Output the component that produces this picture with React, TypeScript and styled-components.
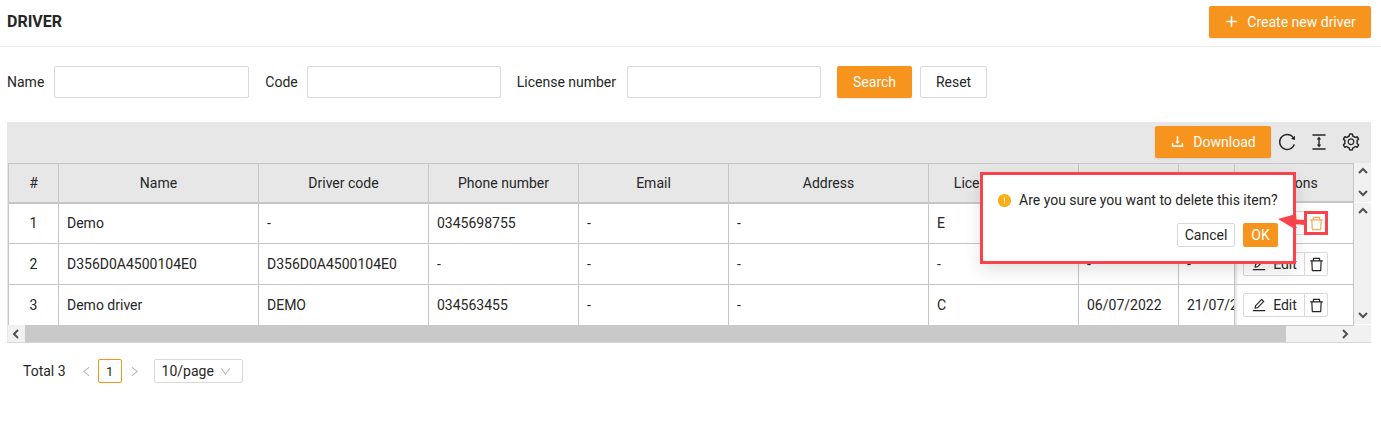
import React from 'react';
import styled, { createGlobalStyle } from 'styled-components';
import {
  AiFillExclamationCircle,
  AiOutlineColumnHeight,
  AiOutlineDelete,
  AiOutlineDownload,
  AiOutlineDown,
  AiOutlineEdit,
  AiOutlineLeft,
  AiOutlinePlus,
  AiOutlineReload,
  AiOutlineRight,
  AiOutlineSetting,
} from 'react-icons/ai';

const ORANGE = '#f7941d';
const LINE = '#c6c6c6';
const RED = '#f9434c';
const HEAD_BG = '#e7e7e7';

const GlobalStyle = createGlobalStyle`
  * { box-sizing: border-box; }
  html, body { margin: 0; background: #fff; }
  body {
    font-family: Roboto, "Liberation Sans", sans-serif;
    font-size: 14px;
    color: #262626;
  }
`;

const Page = styled.div`
  position: relative;
  width: 1381px;
  height: 422px;
  overflow: hidden;
`;

const Header = styled.header`
  display: flex;
  justify-content: space-between;
  align-items: center;
  height: 47px;
  padding: 0 10px 3px 7px;
  border-bottom: 1px solid #eeeeee;
`;

const Title = styled.h1`
  margin: 0;
  font-size: 16px;
  font-weight: 700;
  color: #262626;
`;

const PrimaryButton = styled.button<{ $width: number; $gap?: number }>`
  display: flex;
  align-items: center;
  justify-content: center;
  gap: ${(p) => p.$gap ?? 0}px;
  width: ${(p) => p.$width}px;
  height: 32px;
  padding: 0;
  border: none;
  border-radius: 2px;
  background: ${ORANGE};
  color: #fff;
  font: inherit;
  box-shadow: 0 1px 2px rgba(0, 0, 0, 0.1);

  svg {
    stroke: currentColor;
    stroke-width: 30;
  }
`;

const FilterRow = styled.form`
  display: flex;
  align-items: center;
  height: 32px;
  margin: 19px 0 24px 7px;
`;

const FilterLabel = styled.label<{ $gap: number }>`
  margin-right: ${(p) => p.$gap}px;
`;

const FilterInput = styled.input<{ $width: number; $after: number }>`
  width: ${(p) => p.$width}px;
  height: 32px;
  margin-right: ${(p) => p.$after}px;
  border: 1px solid #d9d9d9;
  border-radius: 2px;
  background: #fff;
`;

const ResetButton = styled.button`
  width: 67px;
  height: 32px;
  margin-left: 8px;
  border: 1px solid #d9d9d9;
  border-radius: 2px;
  background: #fff;
  color: #262626;
  font: inherit;
`;

const Panel = styled.section`
  width: 1364px;
  margin-left: 7px;
  background: ${HEAD_BG};
  border-bottom: 1px solid #d8d8d8;
`;

const Toolbar = styled.div`
  display: flex;
  align-items: center;
  justify-content: flex-end;
  height: 41px;
  padding: 0 10px 2px 0;
  color: #262626;
`;

const ToolIcon = styled.span`
  display: flex;
  width: 20px;
  margin-left: 12px;
  font-size: 20px;

  &:first-of-type {
    margin-left: 6px;
  }
`;

const TableArea = styled.div`
  display: flex;
  margin-left: 1px;
  height: 162px;
  background: #fff;
`;

const MainColumn = styled.div`
  width: 1226px;
  overflow: hidden;
`;

const Table = styled.table`
  table-layout: fixed;
  width: 1350px;
  border-collapse: collapse;
  border-top: 1px solid ${LINE};
  border-left: 1px solid ${LINE};
`;

const HeadCell = styled.th`
  height: 39px;
  padding: 0 8px;
  background: ${HEAD_BG};
  border-right: 1px solid ${LINE};
  border-bottom: 2px solid ${LINE};
  font-weight: 400;
  text-align: center;
`;

const Cell = styled.td<{ $center?: boolean }>`
  height: 41px;
  padding: 0 8px;
  border-right: 1px solid ${LINE};
  border-bottom: 1px solid ${LINE};
  background: #fff;
  white-space: nowrap;
  overflow: hidden;
  text-align: ${(p) => (p.$center ? 'center' : 'left')};
`;

const ActionsColumn = styled.div`
  width: 120px;
  border-left: 1px solid ${LINE};
  border-top: 1px solid ${LINE};
  box-shadow: inset 3px 0 2px -1px rgba(0, 0, 0, 0.1);
  z-index: 1;
`;

const ActionsHead = styled.div`
  display: flex;
  align-items: center;
  justify-content: center;
  height: 39px;
  background: ${HEAD_BG};
  border-bottom: 2px solid ${LINE};
  border-right: 1px solid ${LINE};
`;

const ActionsCell = styled.div`
  display: flex;
  align-items: center;
  height: 41px;
  padding-left: 8px;
  border-bottom: 1px solid ${LINE};
  border-right: 1px solid ${LINE};
`;

const EditButton = styled.button`
  display: flex;
  align-items: center;
  justify-content: center;
  gap: 6px;
  width: 62px;
  height: 24px;
  padding: 0;
  border: 1px solid #d9d9d9;
  border-radius: 2px 0 0 2px;
  background: #fff;
  color: #262626;
  font: inherit;
`;

const DeleteButton = styled.button<{ $active?: boolean }>`
  display: flex;
  align-items: center;
  justify-content: center;
  width: 24px;
  height: 24px;
  margin-left: -1px;
  padding: 0;
  border: 1px solid #d9d9d9;
  border-radius: 0 2px 2px 0;
  background: #fff;
  color: ${(p) => (p.$active ? '#f9a94b' : '#262626')};
  font-size: 17px;
`;

const ScrollColumn = styled.div`
  display: flex;
  flex-direction: column;
  flex: 1;
  background: #f1f1f1;
`;

const ScrollTrack = styled.div<{ $height: number }>`
  display: flex;
  flex-direction: column;
  justify-content: space-between;
  align-items: center;
  height: ${(p) => p.$height}px;
  padding: 3px 0;
  border-bottom: 1px solid #fff;
`;

const HorizontalBar = styled.div`
  display: flex;
  align-items: center;
  height: 17px;
  margin-left: 1px;
  background: #f1f1f1;
`;

const BarButton = styled.span`
  display: flex;
  justify-content: center;
  width: 17px;
`;

const BarThumb = styled.div`
  width: 1261px;
  height: 17px;
  background: #c9c9c9;
`;

const BarEnd = styled.span`
  display: flex;
  justify-content: flex-end;
  flex: 1;
  padding-right: 20px;
`;

const Pagination = styled.nav`
  display: flex;
  align-items: center;
  height: 24px;
  margin: 16px 0 0 23px;
`;

const PageArrow = styled.span<{ $left: number; $right: number }>`
  display: flex;
  margin: 0 ${(p) => p.$right}px 0 ${(p) => p.$left}px;
  color: #b5b5b5;
  font-size: 13px;
`;

const PageNumber = styled.span`
  display: flex;
  align-items: center;
  justify-content: center;
  width: 24px;
  height: 24px;
  border: 1px solid ${ORANGE};
  border-radius: 2px;
  font-size: 13px;
`;

const PageSize = styled.div`
  display: flex;
  align-items: center;
  justify-content: space-between;
  width: 89px;
  height: 24px;
  padding: 0 10px 0 7px;
  border: 1px solid #d9d9d9;
  border-radius: 2px;
`;

const PageSizeArrow = styled.span`
  display: flex;
  color: #b5b5b5;
  font-size: 13px;
`;

/* The confirm box and the red callout marks sit on top of the table */
const Popconfirm = styled.div`
  position: absolute;
  left: 980px;
  top: 172px;
  z-index: 3;
  width: 316px;
  height: 92px;
  padding: 15px 15px 0 14px;
  background: #fff;
  border: 3px solid ${RED};
  box-shadow: 0 6px 16px rgba(0, 0, 0, 0.12);
`;

const PopMessage = styled.div`
  display: flex;
  align-items: center;
  gap: 7px;
  height: 20px;
  white-space: nowrap;
  color: #262626;
`;

const WarnIcon = styled.span`
  display: flex;
  color: #faad14;
  font-size: 15px;
`;

const PopActions = styled.div`
  display: flex;
  justify-content: flex-end;
  gap: 8px;
  margin-top: 13px;
`;

const CancelButton = styled.button`
  width: 58px;
  height: 24px;
  padding: 0;
  border: 1px solid #d9d9d9;
  border-radius: 2px;
  background: #fff;
  color: #262626;
  font: inherit;
`;

const OkButton = styled.button`
  width: 35px;
  height: 24px;
  padding: 0;
  border: none;
  border-radius: 2px;
  background: ${ORANGE};
  color: #fff;
  font: inherit;
`;

const CalloutFrame = styled.div`
  position: absolute;
  left: 1304px;
  top: 211px;
  z-index: 3;
  width: 24px;
  height: 24px;
  border: 3px solid ${RED};
`;

const CalloutArrow = styled.svg`
  position: absolute;
  left: 1276px;
  top: 212px;
  z-index: 3;
`;

const columns = [50, 200, 170, 150, 150, 200, 150, 100, 180];
const headers = ['#', 'Name', 'Driver code', 'Phone number', 'Email', 'Address', 'License number', 'Issue date', 'Expiry date'];
const rows = [
  ['1', 'Demo', '-', '0345698755', '-', '-', 'E', '-', '-'],
  ['2', 'D356D0A4500104E0', 'D356D0A4500104E0', '-', '-', '-', '-', '-', '-'],
  ['3', 'Demo driver', 'DEMO', '034563455', '-', '-', 'C', '06/07/2022', '21/07/2022'],
];

const Chevron = ({ dir }: { dir: 'up' | 'down' | 'left' | 'right' }) => {
  const points = {
    up: '2,7 6,3 10,7',
    down: '2,4 6,8 10,4',
    left: '7,2 3,6 7,10',
    right: '4,2 8,6 4,10',
  }[dir];
  return (
    <svg width="12" height="12" viewBox="0 0 12 12">
      <polyline points={points} fill="none" stroke="#505050" strokeWidth="2" />
    </svg>
  );
};

export default function App() {
  return (
    <Page>
      <GlobalStyle />
      <Header>
        <Title>DRIVER</Title>
        <PrimaryButton $width={162} $gap={8}>
          <AiOutlinePlus size={15} />
          Create new driver
        </PrimaryButton>
      </Header>

      <FilterRow>
        <FilterLabel $gap={10}>Name</FilterLabel>
        <FilterInput $width={195} $after={16} />
        <FilterLabel $gap={9}>Code</FilterLabel>
        <FilterInput $width={194} $after={16} />
        <FilterLabel $gap={11}>License number</FilterLabel>
        <FilterInput $width={194} $after={16} />
        <PrimaryButton type="button" $width={75}>Search</PrimaryButton>
        <ResetButton type="button">Reset</ResetButton>
      </FilterRow>

      <Panel>
        <Toolbar>
          <PrimaryButton $width={116} $gap={8}>
            <AiOutlineDownload size={15} />
            Download
          </PrimaryButton>
          <ToolIcon><AiOutlineReload /></ToolIcon>
          <ToolIcon><AiOutlineColumnHeight /></ToolIcon>
          <ToolIcon><AiOutlineSetting /></ToolIcon>
        </Toolbar>

        <TableArea>
          <MainColumn>
            <Table>
              <colgroup>
                {columns.map((width, i) => (
                  <col key={i} style={{ width }} />
                ))}
              </colgroup>
              <thead>
                <tr>
                  {headers.map((label) => (
                    <HeadCell key={label}>{label}</HeadCell>
                  ))}
                </tr>
              </thead>
              <tbody>
                {rows.map((row) => (
                  <tr key={row[0]}>
                    {row.map((value, i) => (
                      <Cell key={i} $center={i === 0}>{value}</Cell>
                    ))}
                  </tr>
                ))}
              </tbody>
            </Table>
          </MainColumn>

          <ActionsColumn>
            <ActionsHead>Actions</ActionsHead>
            {rows.map((row, i) => (
              <ActionsCell key={row[0]}>
                <EditButton>
                  <AiOutlineEdit size={16} />
                  Edit
                </EditButton>
                <DeleteButton $active={i === 0}>
                  <AiOutlineDelete />
                </DeleteButton>
              </ActionsCell>
            ))}
          </ActionsColumn>

          <ScrollColumn>
            <ScrollTrack $height={40}>
              <Chevron dir="up" />
              <Chevron dir="down" />
            </ScrollTrack>
            <ScrollTrack $height={122}>
              <Chevron dir="up" />
              <Chevron dir="down" />
            </ScrollTrack>
          </ScrollColumn>
        </TableArea>

        <HorizontalBar>
          <BarButton><Chevron dir="left" /></BarButton>
          <BarThumb />
          <BarEnd><Chevron dir="right" /></BarEnd>
        </HorizontalBar>
      </Panel>

      <Pagination>
        <span>Total 3</span>
        <PageArrow $left={14} $right={5}><AiOutlineLeft /></PageArrow>
        <PageNumber>1</PageNumber>
        <PageArrow $left={6} $right={13}><AiOutlineRight /></PageArrow>
        <PageSize>
          10/page
          <PageSizeArrow><AiOutlineDown /></PageSizeArrow>
        </PageSize>
      </Pagination>

      <Popconfirm>
        <PopMessage>
          <WarnIcon><AiFillExclamationCircle /></WarnIcon>
          Are you sure you want to delete this item?
        </PopMessage>
        <PopActions>
          <CancelButton>Cancel</CancelButton>
          <OkButton>OK</OkButton>
        </PopActions>
      </Popconfirm>

      <CalloutFrame />
      <CalloutArrow width="32" height="20" viewBox="0 0 32 20">
        <polygon points="2,7 20,2 20.5,7.5 29,8 29,13 18,12 17,16" fill={RED} />
      </CalloutArrow>
    </Page>
  );
}
